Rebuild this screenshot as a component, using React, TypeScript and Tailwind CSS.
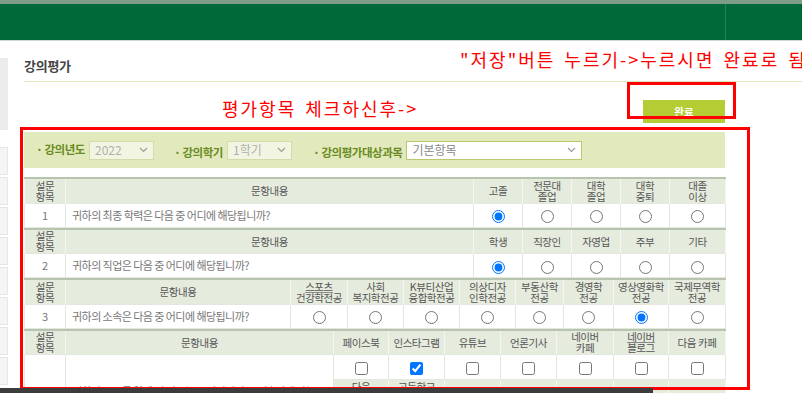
import type { ReactNode } from "react";

interface Option {
  label: string;
  width: string;
  underline?: boolean;
}

interface Question {
  no: string;
  text: string;
  textWidth: string;
  kind: "radio" | "checkbox";
  options: Option[];
  checked: number;
}

const questions: Question[] = [
  {
    no: "1",
    text: "귀하의 최종 학력은 다음 중 어디에 해당됩니까?",
    textWidth: "w-[408px]",
    kind: "radio",
    checked: 0,
    options: [
      { label: "고졸", width: "w-[49px]" },
      { label: "전문대\n졸업", width: "w-[49px]" },
      { label: "대학\n졸업", width: "w-[49px]" },
      { label: "대학\n중퇴", width: "w-[49px]" },
      { label: "대졸\n이상", width: "w-[56px]" },
    ],
  },
  {
    no: "2",
    text: "귀하의 직업은 다음 중 어디에 해당됩니까?",
    textWidth: "w-[408px]",
    kind: "radio",
    checked: 0,
    options: [
      { label: "학생", width: "w-[49px]" },
      { label: "직장인", width: "w-[49px]" },
      { label: "자영업", width: "w-[49px]" },
      { label: "주부", width: "w-[49px]" },
      { label: "기타", width: "w-[56px]" },
    ],
  },
  {
    no: "3",
    text: "귀하의 소속은 다음 중 어디에 해당됩니까?",
    textWidth: "w-[225px]",
    kind: "radio",
    checked: 6,
    options: [
      { label: "스포츠\n건강학전공", width: "w-[57px]", underline: true },
      { label: "사회\n복지학전공", width: "w-[56px]" },
      { label: "K뷰티산업\n융합학전공", width: "w-[56px]" },
      { label: "의상디자\n인학전공", width: "w-[56px]" },
      { label: "부동산학\n전공", width: "w-[48px]" },
      { label: "경영학\n전공", width: "w-[50px]" },
      { label: "영상영화학\n전공", width: "w-[55px]" },
      { label: "국제무역학\n전공", width: "w-[57px]" },
    ],
  },
];

const channelWidths = ["w-[55px]", "w-[56px]", "w-[56px]", "w-[56px]", "w-[57px]", "w-[55px]", "w-[57px]"];
const channelsA = ["페이스북", "인스타그램", "유튜브", "언론기사", "네이버\n카페", "네이버\n블로그", "다음 카페"];
const channelsB = ["다음\n블로그", "고등학교\n홈페이지", "친구/지인", "방송광고", "입시설명회", "기타", ""];

const headCell =
  "border-x border-[#f4f6f1] p-0 text-center align-middle text-[10.5px] font-normal leading-[11px] text-[#555] tracking-[-0.04em]";
const bodyCell = "border border-[#e4e7e0] p-0 text-center align-middle text-[11px] text-[#777]";

function Label({ text, underline }: { text: string; underline?: boolean }) {
  const lines = text.split("\n");
  return (
    <>
      {lines.map((line, i) => (
        <span
          key={line + i}
          className={`block whitespace-nowrap ${underline && i === 0 ? "underline decoration-[#888]" : ""}`}
        >
          {line}
        </span>
      ))}
    </>
  );
}

function Choice({ kind, checked, name }: { kind: "radio" | "checkbox"; checked: boolean; name: string }) {
  return (
    <input
      type={kind}
      name={name}
      defaultChecked={checked}
      className="m-0 h-[13px] w-[13px] align-middle"
    />
  );
}

function HeadRow({ children }: { children: ReactNode }) {
  return <tr className="h-[25px] border-t-2 border-[#b7c4ae] bg-[#e5ebdd]">{children}</tr>;
}

function QuestionTable({ q }: { q: Question }) {
  return (
    <table className="w-[701px] table-fixed border-collapse">
      <colgroup>
        <col className="w-[41px]" />
        <col className={q.textWidth} />
        {q.options.map((o) => (
          <col key={o.label} className={o.width} />
        ))}
      </colgroup>
      <thead>
        <HeadRow>
          <th className={headCell}>
            <Label text={"설문\n항목"} />
          </th>
          <th className={headCell}>문항내용</th>
          {q.options.map((o) => (
            <th key={o.label} className={headCell}>
              <Label text={o.label} underline={o.underline} />
            </th>
          ))}
        </HeadRow>
      </thead>
      <tbody>
        <tr className="h-[24px] bg-white">
          <td className={bodyCell}>{q.no}</td>
          <td className={`${bodyCell} pl-[6px] text-left tracking-[-0.05em]`}>{q.text}</td>
          {q.options.map((o, i) => (
            <td key={o.label} className={bodyCell}>
              <Choice kind={q.kind} checked={i === q.checked} name={`q${q.no}`} />
            </td>
          ))}
        </tr>
      </tbody>
    </table>
  );
}

function ChannelTable() {
  return (
    <table className="w-[701px] table-fixed border-collapse">
      <colgroup>
        <col className="w-[41px]" />
        <col className="w-[268px]" />
        {channelWidths.map((w, i) => (
          <col key={i} className={w} />
        ))}
      </colgroup>
      <tbody>
        <HeadRow>
          <th className={headCell}>
            <Label text={"설문\n항목"} />
          </th>
          <th className={headCell}>문항내용</th>
          {channelsA.map((c) => (
            <th key={c} className={headCell}>
              <Label text={c} underline={c === "네이버\n블로그"} />
            </th>
          ))}
        </HeadRow>
        <tr className="h-[25px] bg-white">
          <td rowSpan={3} className={bodyCell}>
            4
          </td>
          <td rowSpan={3} className={`${bodyCell} pl-[6px] text-left tracking-[-0.05em]`}>
            귀하가 본교를 알게 된 경로는 무엇입니까? (중복 선택 가능)
          </td>
          {channelsA.map((c, i) => (
            <td key={c} className={bodyCell}>
              <Choice kind="checkbox" checked={i === 1} name={`c${i}`} />
            </td>
          ))}
        </tr>
        <tr className="h-[25px] bg-[#e5ebdd]">
          {channelsB.map((c, i) => (
            <th key={i} className={headCell}>
              <Label text={c} />
            </th>
          ))}
        </tr>
        <tr className="h-[24px] bg-white">
          {channelsB.map((c, i) => (
            <td key={i} className={bodyCell}>
              {c ? <Choice kind="checkbox" checked={false} name={`d${i}`} /> : null}
            </td>
          ))}
        </tr>
      </tbody>
    </table>
  );
}

function Chevron() {
  return (
    <svg width="9" height="6" viewBox="0 0 9 6" className="shrink-0">
      <path d="M1 1l3.5 3.5L8 1" fill="none" stroke="#9a9a9a" strokeWidth="1.1" />
    </svg>
  );
}

function FakeSelect({ value, width, disabled }: { value: string; width: string; disabled?: boolean }) {
  return (
    <div
      className={`flex h-[19px] items-center justify-between border px-[5px] text-[12px] ${width} ${
        disabled ? "border-[#d3dba9] bg-[#f2f5e2] text-[#b0b0b0]" : "border-[#b9c76e] bg-white text-[#888]"
      }`}
    >
      <span className="whitespace-nowrap">{value}</span>
      <Chevron />
    </div>
  );
}

function FilterLabel({ children }: { children: ReactNode }) {
  return (
    <span className="whitespace-nowrap text-[11.5px] font-bold tracking-[-0.04em] text-[#6a8b22]">
      · {children}
    </span>
  );
}

export default function App() {
  const sideBoxes = Array.from({ length: 8 }, (_, i) => i);

  return (
    <div className="relative h-[393px] w-[802px] overflow-hidden bg-white font-['Noto_Sans_CJK_KR','Noto_Sans',sans-serif]">
      {/* top bar */}
      <div className="h-[4px] bg-[#7d9d88]" />
      <div className="flex h-[36px] bg-[#00693a]">
        <div className="w-[725px]" />
        <div className="flex-1 border-l border-[#2f7f55]" />
      </div>
      <div className="h-px bg-[#cfd9d2]" />

      <div className="flex">
        {/* cut-off side menu */}
        <div className="w-[8px] shrink-0">
          <div className="mt-[17px] h-[72px] bg-[#ebebeb]" />
          <div className="mt-[17px] flex flex-col gap-[2px]">
            {sideBoxes.map((i) => (
              <div key={i} className="h-[28px] border border-l-0 border-[#e6e6e6] bg-[#f5f5f5]" />
            ))}
          </div>
        </div>

        <div className="flex-1 pl-[16px]">
          <div className="border-b border-[#e2e6b8] pb-[5px] pt-[15px]">
            <h1 className="text-[13px] font-bold leading-[20px] tracking-[-0.02em] text-[#444]">강의평가</h1>
          </div>

          <div className="w-[701px]">
            <div className="mt-[18px] flex justify-end">
              <button className="h-[23px] w-[82px] bg-[#b6cc34] text-[10.5px] font-bold text-white">완료</button>
            </div>

            <div className="mt-[9px] flex h-[36px] items-center bg-[#e2eabd] pl-[12px]">
              <FilterLabel>강의년도</FilterLabel>
              <div className="ml-[4px]">
                <FakeSelect value="2022" width="w-[65px]" disabled />
              </div>
              <div className="ml-[20px]">
                <FilterLabel>강의학기</FilterLabel>
              </div>
              <div className="ml-[4px]">
                <FakeSelect value="1학기" width="w-[65px]" disabled />
              </div>
              <div className="ml-[21px]">
                <FilterLabel>강의평가대상과목</FilterLabel>
              </div>
              <div className="ml-[4px]">
                <FakeSelect value="기본항목" width="w-[176px]" />
              </div>
            </div>

            <div className="mt-[9px]">
              {questions.map((q) => (
                <QuestionTable key={q.no} q={q} />
              ))}
              <ChannelTable />
            </div>
          </div>
        </div>
      </div>

      {/* annotations */}
      <p className="absolute left-[460px] top-[47px] whitespace-nowrap text-[18px] leading-[24px] tracking-[2px] text-[#ff0000] [word-spacing:3px]">
        "저장"버튼 누르기-&gt;누르시면 완료로 됨
      </p>
      <p className="absolute left-[222px] top-[96px] whitespace-nowrap text-[18px] leading-[24px] tracking-[2px] text-[#ff0000] [word-spacing:3px]">
        평가항목 체크하신후-&gt;
      </p>
      <div className="absolute left-[627px] top-[82px] h-[37px] w-[109px] border-[3px] border-[#ff0000]" />
      <div className="absolute left-[20px] top-[127px] h-[263px] w-[730px] border-[3px] border-[#ff0000]" />

      {/* dark strip at bottom edge */}
      <div className="absolute bottom-0 left-0 h-[5px] w-[653px] bg-[#3c3c3c]" />
    </div>
  );
}
